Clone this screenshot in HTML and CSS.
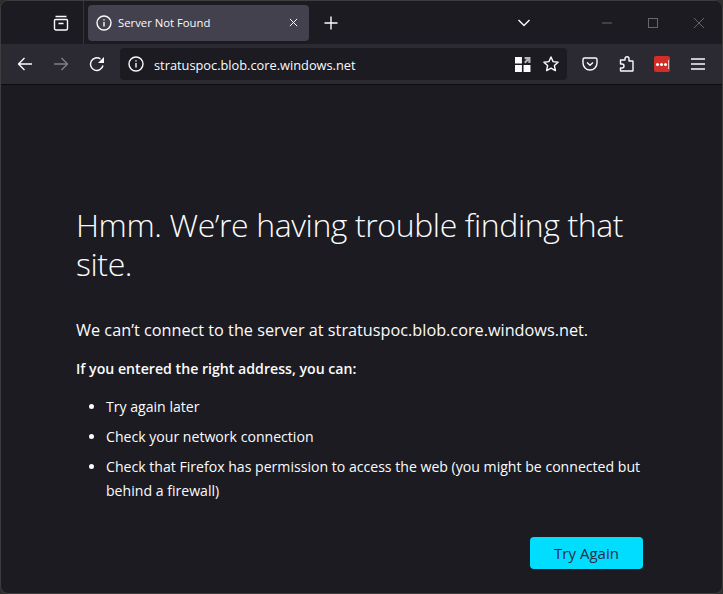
FILE: index.html
```html
<!DOCTYPE html>
<html lang="en">
<head>
<meta charset="utf-8">
<title>Server Not Found</title>
<link rel="stylesheet" href="styles.css">
</head>
<body>
<div class="window">
  <div class="tabbar">
    <div class="tabs-left">
      <svg class="icon" viewBox="0 0 16 16"><path d="M2.500 1.500h11M2.500 4.500h11a1 1 0 0 1 1 1v8a1.500 1.500 0 0 1-1.500 1.500H3a1.500 1.500 0 0 1-1.500-1.500v-8a1 1 0 0 1 1-1zM5.500 8.500h5"/></svg>
    </div>
    <div class="tab">
      <svg class="icon" viewBox="0 0 16 16"><circle cx="8" cy="8" r="7"/><path d="M8 7v4.500M8 4.200v1.300"/></svg>
      <span class="tab-title">Server Not Found</span>
      <svg class="tab-close" viewBox="0 0 10 10"><path d="M1 1l8 8M9 1l-8 8"/></svg>
    </div>
    <svg class="icon newtab" viewBox="0 0 16 16"><path d="M8 1.500v13M1.500 8h13"/></svg>
    <div class="spacer"></div>
    <svg class="icon chevron" viewBox="0 0 14 10"><path d="M1.500 2l5.500 5.500L12.500 2"/></svg>
    <div class="winctl">
      <svg class="ctl" viewBox="0 0 10 10"><path d="M0 5h10"/></svg>
      <svg class="ctl" viewBox="0 0 10 10"><rect x=".5" y=".5" width="9" height="9"/></svg>
      <svg class="ctl" viewBox="0 0 10 10"><path d="M0 0l10 10M10 0L0 10"/></svg>
    </div>
  </div>
  <div class="toolbar">
    <svg class="icon nav" viewBox="0 0 16 16"><path d="M15 8H1.500M7.500 2l-6 6 6 6"/></svg>
    <svg class="icon nav dim" viewBox="0 0 16 16"><path d="M1 8h13.500M8.500 2l6 6-6 6"/></svg>
    <svg class="icon nav" viewBox="0 0 16 16"><path d="M14 9.500A6.300 6.300 0 1 1 11.500 3"/><path class="fill" d="M15 1v6H9z"/></svg>
    <div class="urlbar">
      <svg class="icon" viewBox="0 0 16 16"><circle cx="8" cy="8" r="7"/><path d="M8 7v4.500M8 4.200v1.300"/></svg>
      <span class="url">stratuspoc.blob.core.windows.net</span>
      <div class="spacer"></div>
      <svg class="icon qr" viewBox="0 0 15 15"><path class="fill" d="M0 1h6.500v6H0zM0 8.500h6.500V15H0zM8 8.500h6.500V15H8z"/><path class="gray" d="M9 1h5.500v5.500h-2V4.400L9.800 7 8.500 5.600 11 3H9z"/></svg>
      <svg class="icon star" viewBox="0 0 16 16"><path d="M8 1l2.100 4.600 5 .6-3.700 3.400 1 5L8 12.100 3.600 14.600l1-5L.9 6.200l5-.6z"/></svg>
    </div>
    <div class="tools">
      <svg class="icon" viewBox="0 0 16 16"><path d="M2.500 2h11A1.500 1.500 0 0 1 15 3.500V7A7 7 0 0 1 1 7V3.500A1.500 1.500 0 0 1 2.500 2zM5 6.500l3 2.800 3-2.800"/></svg>
      <svg class="icon" viewBox="0 0 16 16"><path d="M2.500 4H7V2.700a2 2 0 0 1 4 0V5h3.500a.5.500 0 0 1 .5.500V14.500a.5.500 0 0 1-.5.500H3a.5.500 0 0 1-.5-.5V12h1.500a2 2 0 0 0 0-4H2.500z"/></svg>
      <div class="lastpass"><span class="dots"></span><span class="dots"></span><span class="dots"></span><span class="bar"></span></div>
      <svg class="icon" viewBox="0 0 16 16"><path d="M1 3h14M1 8h14M1 13h14"/></svg>
    </div>
  </div>
  <main class="content">
    <h1>Hmm. We’re having trouble finding that site.</h1>
    <p class="lead">We can’t connect to the server at stratuspoc.blob.core.windows.net.</p>
    <p class="strong">If you entered the right address, you can:</p>
    <ul>
      <li>Try again later</li>
      <li>Check your network connection</li>
      <li>Check that Firefox has permission to access the web (you might be connected but behind a firewall)</li>
    </ul>
    <div class="actions"><button class="retry">Try Again</button></div>
  </main>
</div>
</body>
</html>
```
FILE: styles.css
```css
* { box-sizing: border-box; }
html, body { margin: 0; height: 100%; background: #2e2e2e; }
body { font-family: "Open Sans", "Noto Sans", sans-serif; color: #fbfbfe; overflow: hidden; }
.window { width: 723px; height: 594px; display: flex; flex-direction: column; background: #1c1b22; border: 1px solid #3d3d3f; border-radius: 8px; overflow: hidden; }
.icon { width: 16px; height: 16px; fill: none; stroke: #fbfbfe; stroke-width: 1.4; stroke-linejoin: round; flex: none; }
.fill { fill: #fbfbfe; stroke: none; }
.gray { fill: #b5b5b8; stroke: none; }
.spacer { flex: 1; }
.tabbar { height: 43px; display: flex; align-items: center; background: #1c1b22; flex: none; }
.tabs-left { width: 83px; height: 43px; flex: none; display: flex; align-items: center; justify-content: flex-end; padding-right: 14px; border-right: 1px solid #34343b; }
.tab { width: 221px; height: 36px; margin: 0 0 0 4px; background: #42414d; border-radius: 4px; display: flex; align-items: center; padding: 0 11px 0 8px; }
.tab-title { font-size: 11.300px; margin-left: 6px; flex: 1; color: #fbfbfe; }
.tab-close { width: 9px; height: 9px; fill: none; stroke: #fbfbfe; stroke-width: 1.1; }
.newtab { margin-left: 14px; }
.chevron { width: 14px; height: 10px; margin-right: 71px; }
.winctl { display: flex; gap: 36px; padding-right: 18px; align-items: center; }
.ctl { width: 10px; height: 10px; fill: none; stroke: #66666b; stroke-width: 1; }
.toolbar { height: 41px; flex: none; display: flex; align-items: center; background: #2b2a33; border-bottom: 1px solid #0c0c0d; padding-left: 16px; }
.nav { margin-right: 20px; }
.nav:nth-child(3) { margin-right: 15px; }
.dim { opacity: .4; }
.urlbar { width: 447px; height: 32px; background: #1c1b22; border-radius: 4px; display: flex; align-items: center; padding: 0 8px; }
.url { margin-left: 10px; font-size: 12.800px; padding-top: 2px; color: #fbfbfe; }
.qr { margin-right: 12px; }
.tools { display: flex; align-items: center; gap: 20px; padding-left: 15px; }
.lastpass { width: 16px; height: 16px; background: #d32d27; border-radius: 2px; display: flex; align-items: center; justify-content: center; gap: 1px; }
.dots { width: 3px; height: 3px; background: #fff; border-radius: 50%; }
.bar { width: 1px; height: 9px; background: #f6b5b2; }
.content { flex: 1; padding: 120px 79px 0 75px; display: flex; flex-direction: column; }
h1 { margin: 0; font-size: 32px; font-weight: 300; line-height: 39px; letter-spacing: -.4px; }
.lead { margin: 35px 0 0; font-size: 16.250px; line-height: 24px; }
.strong { margin: 16px 0 0; font-size: 14.150px; font-weight: 600; line-height: 22px; }
ul { margin: 15px 0 0; padding: 0 0 0 30px; font-size: 14.100px; line-height: 24px; }
li { margin-bottom: 6px; }
.actions { display: flex; justify-content: flex-end; margin-top: 28px; }
.retry { width: 113px; height: 32px; background: #00ddff; color: #2b2a45; border: 0; border-radius: 4px; font: 500 15px "Open Sans", sans-serif; }
```
